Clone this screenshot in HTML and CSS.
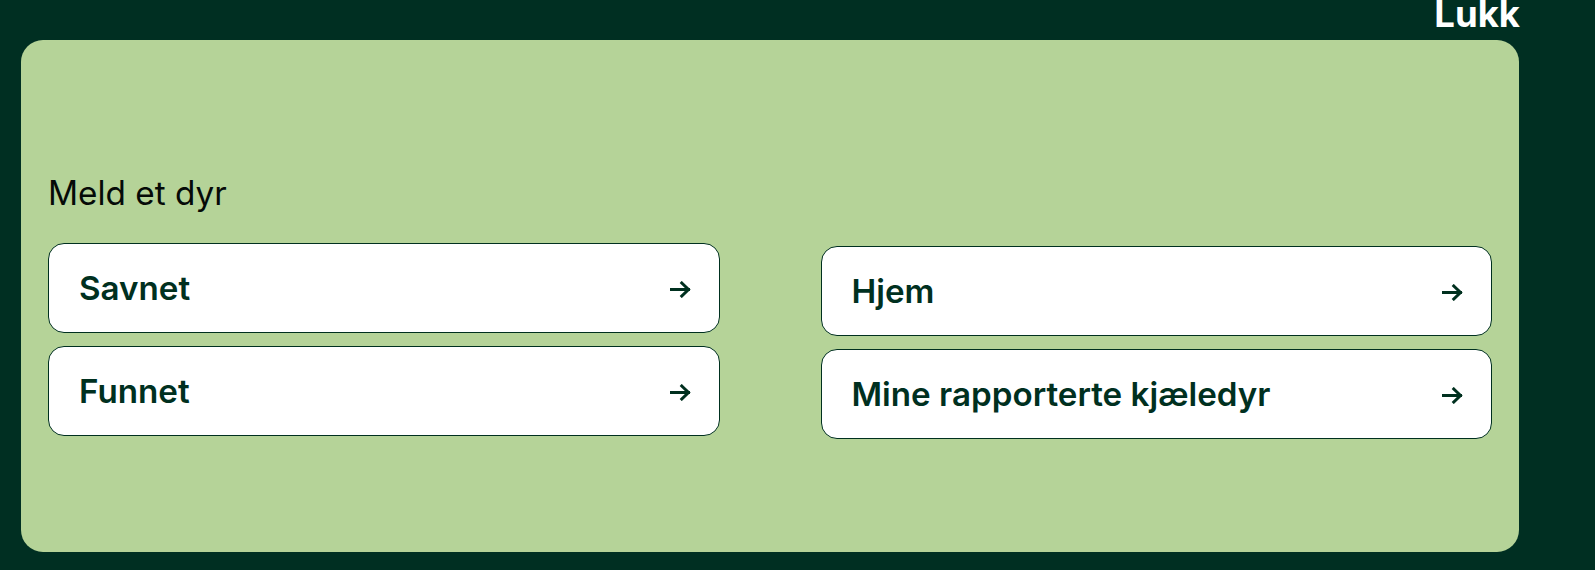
FILE: index.html
```html
<!DOCTYPE html>
<html lang="no">
<head>
<meta charset="utf-8">
<title>Meny</title>
<link rel="stylesheet" href="styles.css">
</head>
<body>
<div class="topbar"><span class="close">Lukk</span></div>
<main class="panel">
  <div class="grid">
    <section class="col">
      <h2 class="heading">Meld et dyr</h2>
      <div class="list">
        <a class="item" href="#"><span>Savnet</span><svg class="arrow" viewBox="0 0 21 17" width="21" height="17"><path d="M1.5 8.5H18.5M11.8 2L18.5 8.5L11.8 15" fill="none" stroke="#00301f" stroke-width="3" stroke-linecap="square"/></svg></a>
        <a class="item" href="#"><span>Funnet</span><svg class="arrow" viewBox="0 0 21 17" width="21" height="17"><path d="M1.5 8.5H18.5M11.8 2L18.5 8.5L11.8 15" fill="none" stroke="#00301f" stroke-width="3" stroke-linecap="square"/></svg></a>
      </div>
    </section>
    <section class="col col-right">
      <div class="list">
        <a class="item" href="#"><span>Hjem</span><svg class="arrow" viewBox="0 0 21 17" width="21" height="17"><path d="M1.5 8.5H18.5M11.8 2L18.5 8.5L11.8 15" fill="none" stroke="#00301f" stroke-width="3" stroke-linecap="square"/></svg></a>
        <a class="item" href="#"><span>Mine rapporterte kjæledyr</span><svg class="arrow" viewBox="0 0 21 17" width="21" height="17"><path d="M1.5 8.5H18.5M11.8 2L18.5 8.5L11.8 15" fill="none" stroke="#00301f" stroke-width="3" stroke-linecap="square"/></svg></a>
      </div>
    </section>
  </div>
</main>
</body>
</html>
```
FILE: styles.css
```css
* { box-sizing: border-box; }
html, body { margin: 0; padding: 0; }
body {
  background: #002f22;
  font-family: Inter, "Noto Sans", sans-serif;
  overflow: hidden;
  height: 570px;
}
.topbar {
  height: 40px;
  display: flex;
  justify-content: flex-end;
  align-items: flex-start;
  padding-right: 75px;
}
.close {
  color: #ffffff;
  font-weight: 700;
  font-size: 36.5px;
  line-height: 28px;
}
.panel {
  margin: 0 76px 0 21px;
  height: 512px;
  background: #b5d398;
  border-radius: 22px;
  padding: 133px 27px 0 27px;
}
.grid {
  display: grid;
  grid-template-columns: 1fr 1fr;
  column-gap: 101px;
}
.heading {
  margin: 0 0 30px 0;
  font-size: 33.3px;
  font-weight: 400;
  line-height: 40px;
  color: #050a07;
}
.col-right { padding-top: 73px; }
.list {
  display: flex;
  flex-direction: column;
  gap: 13px;
}
.item {
  height: 90px;
  display: flex;
  align-items: center;
  justify-content: space-between;
  background: #ffffff;
  border: 1px solid #00301f;
  border-radius: 16px;
  padding: 0 28px 0 30px;
  text-decoration: none;
  color: #00301f;
  font-size: 33.2px;
  font-weight: 580;
  line-height: 40px;
}
.arrow { display: block; margin-top: 2px; }
```
